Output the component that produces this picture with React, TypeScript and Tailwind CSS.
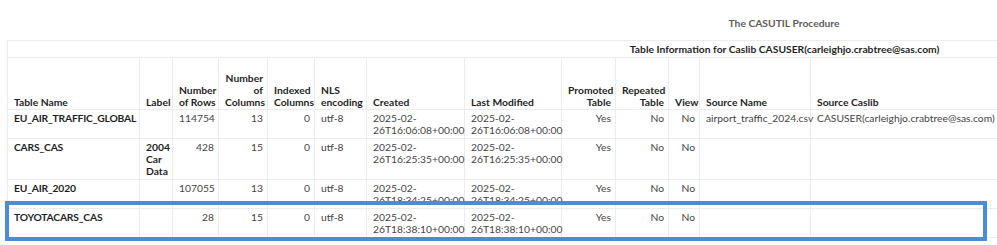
const rows = [
  {
    name: "EU_AIR_TRAFFIC_GLOBAL",
    label: [] as string[],
    rows: "114754",
    cols: "13",
    idx: "0",
    enc: "utf-8",
    created: "26T16:06:08+00:00",
    modified: "26T16:06:08+00:00",
    promoted: "Yes",
    repeated: "No",
    view: "No",
    source: "airport_traffic_2024.csv",
    caslib: "CASUSER(carleighjo.crabtree@sas.com)",
  },
  {
    name: "CARS_CAS",
    label: ["2004", "Car", "Data"],
    rows: "428",
    cols: "15",
    idx: "0",
    enc: "utf-8",
    created: "26T16:25:35+00:00",
    modified: "26T16:25:35+00:00",
    promoted: "Yes",
    repeated: "No",
    view: "No",
    source: "",
    caslib: "",
  },
  {
    name: "EU_AIR_2020",
    label: [],
    rows: "107055",
    cols: "13",
    idx: "0",
    enc: "utf-8",
    created: "26T18:34:25+00:00",
    modified: "26T18:34:25+00:00",
    promoted: "Yes",
    repeated: "No",
    view: "No",
    source: "",
    caslib: "",
  },
  {
    name: "TOYOTACARS_CAS",
    label: [],
    rows: "28",
    cols: "15",
    idx: "0",
    enc: "utf-8",
    created: "26T18:38:10+00:00",
    modified: "26T18:38:10+00:00",
    promoted: "Yes",
    repeated: "No",
    view: "No",
    source: "",
    caslib: "",
  },
];

const widths = [132, 33, 46, 49, 47, 52, 98, 97, 54, 53, 31, 111, 190, 561];

const th = "border border-[#ececec] align-bottom font-bold text-[#1f1f1f] pl-[6px] pr-[4px] pb-[1px] whitespace-nowrap";
const td = "border border-[#ececec] align-top pl-[6px] pr-[4px] pt-[2px] pb-[2px] whitespace-nowrap";

function Lines({ items }: { items: string[] }) {
  return (
    <>
      {items.map((t, i) => (
        <div key={i}>{t}</div>
      ))}
    </>
  );
}

export default function App() {
  return (
    <div
      className="relative w-[997px] h-[245px] overflow-hidden bg-white text-[10.3px] leading-[12px] text-[#444444]"
      style={{ fontFamily: "Lato, 'Noto Sans', sans-serif" }}
    >
      <div className="w-[1554px] ml-[7px]">
        <div className="pt-[16px] h-[40px] text-center font-bold text-[#5c5c5c] leading-[14px]">
          The CASUTIL Procedure
        </div>

        <table className="table-fixed border-collapse w-[1554px]">
          <colgroup>
            {widths.map((w, i) => (
              <col key={i} style={{ width: w }} />
            ))}
          </colgroup>
          <thead>
            <tr className="h-[17px]">
              <th colSpan={14} className="border border-[#ececec] text-center font-bold text-[#1f1f1f] py-[1px]">
                Table Information for Caslib CASUSER(carleighjo.crabtree@sas.com)
              </th>
            </tr>
            <tr className="h-[52px]">
              <th className={`${th} text-left`}>Table Name</th>
              <th className={`${th} text-left`}>Label</th>
              <th className={`${th} text-right`}>
                <Lines items={["Number", "of Rows"]} />
              </th>
              <th className={`${th} text-right`}>
                <Lines items={["Number", "of", "Columns"]} />
              </th>
              <th className={`${th} text-right`}>
                <Lines items={["Indexed", "Columns"]} />
              </th>
              <th className={`${th} text-left`}>
                <Lines items={["NLS", "encoding"]} />
              </th>
              <th className={`${th} text-left`}>Created</th>
              <th className={`${th} text-left`}>Last Modified</th>
              <th className={`${th} text-right`}>
                <Lines items={["Promoted", "Table"]} />
              </th>
              <th className={`${th} text-right`}>
                <Lines items={["Repeated", "Table"]} />
              </th>
              <th className={`${th} text-right`}>View</th>
              <th className={`${th} text-left`}>Source Name</th>
              <th className={`${th} text-left`}>Source Caslib</th>
              <th className={th}></th>
            </tr>
          </thead>
          <tbody>
            {rows.map((r) => (
              <tr key={r.name}>
                <td className={`${td} font-bold tracking-[-0.2px] text-[#1f1f1f]`}>{r.name}</td>
                <td className={`${td} font-bold text-[#1f1f1f]`}>
                  <Lines items={r.label} />
                </td>
                <td className={`${td} text-right`}>{r.rows}</td>
                <td className={`${td} text-right`}>{r.cols}</td>
                <td className={`${td} text-right`}>{r.idx}</td>
                <td className={td}>{r.enc}</td>
                <td className={td}>
                  <Lines items={["2025-02-", r.created]} />
                </td>
                <td className={td}>
                  <Lines items={["2025-02-", r.modified]} />
                </td>
                <td className={`${td} text-right`}>{r.promoted}</td>
                <td className={`${td} text-right`}>{r.repeated}</td>
                <td className={`${td} text-right`}>{r.view}</td>
                <td className={td}>{r.source}</td>
                <td className={td}>{r.caslib}</td>
                <td className={td}></td>
              </tr>
            ))}
          </tbody>
        </table>
      </div>

      {/* highlight around the TOYOTACARS_CAS row */}
      <div className="absolute left-[5px] top-[201px] w-[982px] h-[40px] border-4 border-[#4a8cd6]" />
    </div>
  );
}
